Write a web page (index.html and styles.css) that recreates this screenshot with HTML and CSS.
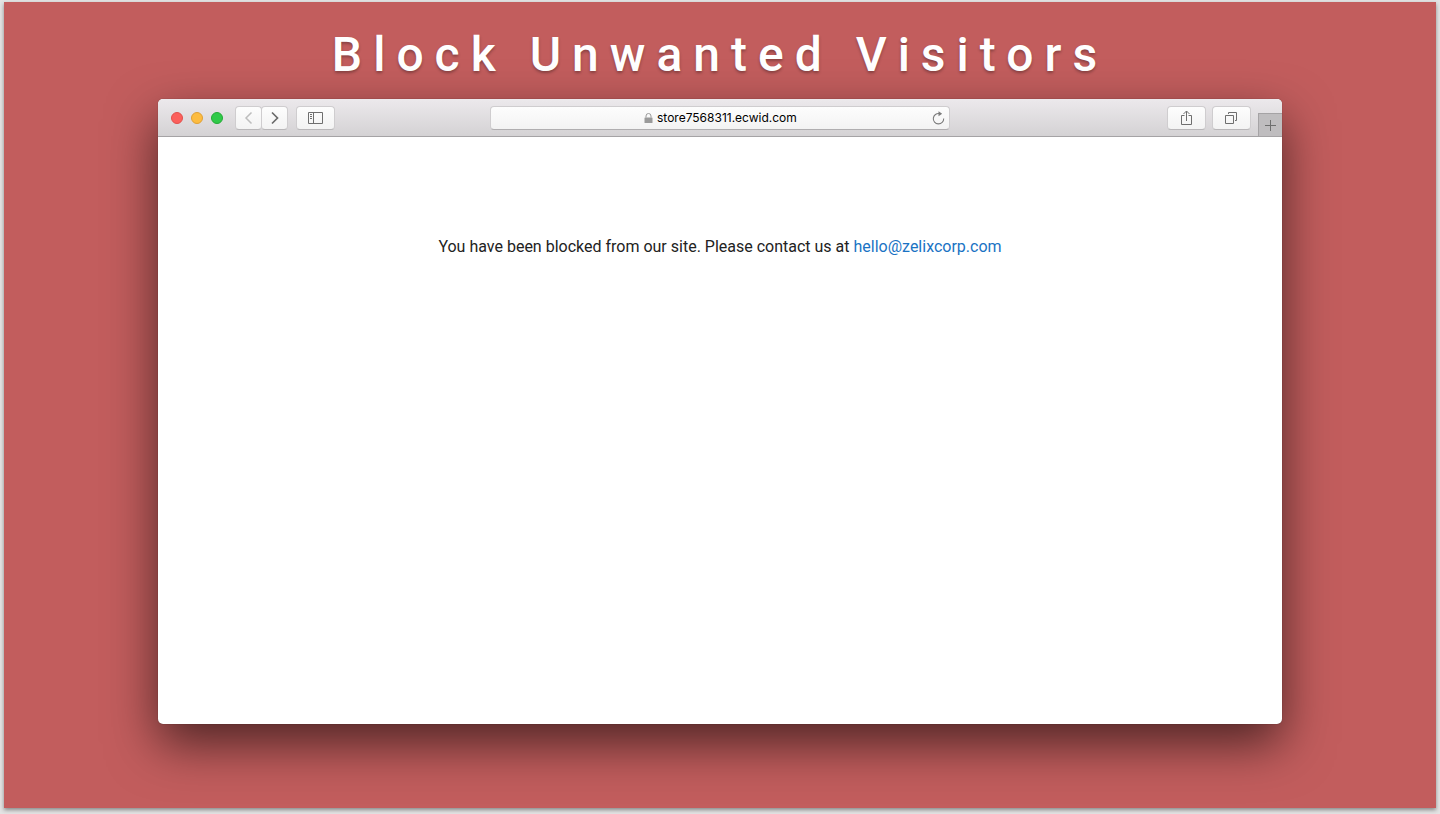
FILE: index.html
```html
<!DOCTYPE html>
<html lang="en">
<head>
    <meta charset="UTF-8">
    <meta name="viewport" content="width=device-width, initial-scale=1.0">
    <title>Block Unwanted Visitors</title>
    <link rel="stylesheet" href="styles.css">
</head>
<body>
    <div class="slide">
        <h1 class="title">Block Unwanted Visitors</h1>
        <div class="browser">
            <div class="toolbar">
                <div class="tools">
                    <div class="lights">
                        <button class="light red" aria-label="Close"></button>
                        <button class="light yellow" aria-label="Minimize"></button>
                        <button class="light green" aria-label="Zoom"></button>
                    </div>
                    <div class="nav">
                        <button class="tool back" aria-label="Back">
                            <svg width="10" height="14" viewBox="0 0 10 14" fill="none" stroke="#bdbdbd" stroke-width="1.5"><path d="M7.5 1.5 2 7l5.5 5.5"/></svg>
                        </button>
                        <button class="tool forward" aria-label="Forward">
                            <svg width="10" height="14" viewBox="0 0 10 14" fill="none" stroke="#6a6a6a" stroke-width="1.7"><path d="M2 1.5 7.5 7 2 12.5"/></svg>
                        </button>
                    </div>
                    <button class="tool" aria-label="Show sidebar">
                        <svg width="15" height="12" viewBox="0 0 15 12" fill="none" stroke="#6e6e6e"><path d="M.5.5h14v11H.5zM5.5.5v11M2 2.5h2M2 4.5h2M2 6.5h2"/></svg>
                    </button>
                </div>
                <div class="address">
                    <div class="site">
                        <svg width="9" height="10" viewBox="0 0 9 10"><path d="M2 4.5V3a2.5 2.5 0 0 1 5 0v1.5" fill="none" stroke="#9a9a9a"/><rect x="0.5" y="4.5" width="8" height="5.5" rx="0.5" fill="#9a9a9a"/></svg>
                        <input class="url" type="text" aria-label="Address" value="store7568311.ecwid.com">
                    </div>
                    <button class="reload" aria-label="Reload">
                        <svg width="13" height="14" viewBox="0 0 13 14"><path d="M7.5 2.6A5.2 5.2 0 1 0 11.7 7.5" fill="none" stroke="#7c7c7c" stroke-width="1.1"/><path d="M6.5.2 10.2 2.8 6.5 5.2z" fill="#7c7c7c"/></svg>
                    </button>
                </div>
                <div class="tools right">
                    <button class="tool" aria-label="Share">
                        <svg width="13" height="16" viewBox="0 0 13 16" fill="none" stroke="#6e6e6e"><path d="M4.5 5.5h-3v9h10v-9h-3M6.5 11V1.2M3.5 4l3-3 3 3"/></svg>
                    </button>
                    <button class="tool" aria-label="Show all tabs">
                        <svg width="13" height="13" viewBox="0 0 13 13" fill="none" stroke="#6e6e6e"><path d="M.5 4.5h8v8h-8zM3.5 3V1.5h8v8H10"/></svg>
                    </button>
                    <button class="new-tab" aria-label="New tab">
                        <svg width="11" height="11" viewBox="0 0 11 11" stroke="#6e6e6e"><path d="M5.5 0v11M0 5.5h11"/></svg>
                    </button>
                </div>
            </div>
            <div class="page">
                <p class="message">You have been blocked from our site. Please contact us at <a href="mailto:hello@zelixcorp.com">hello@zelixcorp.com</a></p>
            </div>
        </div>
    </div>
</body>
</html>
```

FILE: styles.css
```css
* {
    box-sizing: border-box;
}
body {
    margin: 0;
    padding: 2px 4px 6px;
    min-height: 100vh;
    display: flex;
    background: #e3e3e3;
    font-family: Inter, "Liberation Sans", sans-serif;
}
.slide {
    flex: 1;
    display: flex;
    flex-direction: column;
    align-items: center;
    padding: 23px 20px 84px;
    background: #c25d5d;
    box-shadow: 0 2px 4px rgba(0, 0, 0, 0.4);
}
.title {
    margin: 0 0 14px;
    font-family: Roboto, sans-serif;
    font-size: 48px;
    font-weight: 500;
    line-height: 60px;
    letter-spacing: 11px;
    text-align: center;
    color: #fff;
    text-shadow: 0 2px 3px rgba(0, 0, 0, 0.3);
}
.browser {
    flex: 1;
    width: 100%;
    max-width: 1124px;
    display: flex;
    flex-direction: column;
    border-radius: 5px;
    background: #fff;
    box-shadow: 0 0 1px rgba(0, 0, 0, 0.5), 0 20px 50px rgba(0, 0, 0, 0.6);
}
.toolbar {
    display: grid;
    grid-template-columns: 1fr 41% 1fr;
    align-items: center;
    height: 38px;
    border-bottom: 1px solid #a5a3a5;
    border-radius: 5px 5px 0 0;
    background: linear-gradient(#ece9ec, #d4d2d4);
    overflow: hidden;
}
button {
    padding: 0;
    border: none;
    background: none;
}
.tools {
    display: flex;
    align-items: center;
    padding-left: 13px;
}
.lights {
    display: flex;
    gap: 8px;
    margin-right: 12px;
}
.light {
    width: 12px;
    height: 12px;
    border-radius: 50%;
}
.red {
    background: #fc605c;
    border: 1px solid #e2504c;
}
.yellow {
    background: #fdbc40;
    border: 1px solid #e0a034;
}
.green {
    background: #30ca49;
    border: 1px solid #24aa36;
}
.nav {
    display: flex;
    margin-right: 8px;
}
.tool {
    display: flex;
    align-items: center;
    justify-content: center;
    width: 39px;
    height: 24px;
    border: 1px solid #cfcdcf;
    border-bottom-color: #b9b7b9;
    border-radius: 4px;
    background: linear-gradient(#fdfdfd, #f3f3f3);
}
.nav .tool {
    width: 27px;
}
.forward {
    margin-left: -1px;
}
.address {
    display: flex;
    align-items: center;
    height: 24px;
    padding: 0 4px;
    border: 1px solid #cfcdcf;
    border-bottom-color: #b0aeb0;
    border-radius: 4px;
    background: linear-gradient(#fdfdfd, #f3f3f3);
}
.site {
    flex: 1;
    display: flex;
    align-items: center;
    justify-content: center;
    gap: 4px;
    padding-left: 18px;
}
.url {
    width: 144px;
    field-sizing: content;
    padding: 0;
    border: none;
    outline: none;
    background: none;
    font-family: inherit;
    font-size: 12px;
    color: #000;
}
.reload {
    display: flex;
}
.right {
    align-self: stretch;
    justify-content: flex-end;
    gap: 6px;
}
.new-tab {
    align-self: flex-end;
    display: flex;
    align-items: center;
    justify-content: center;
    width: 24px;
    height: 23px;
    margin-left: 1px;
    border: 1px solid #a5a3a5;
    border-width: 1px 0 0 1px;
    background: #bfbdbf;
}
.page {
    flex: 1;
    padding: 98px 20px;
}
.message {
    margin: 0;
    font-family: Roboto, "Liberation Sans", sans-serif;
    font-size: 16px;
    line-height: 24px;
    text-align: center;
    color: #222;
}
.message a {
    color: #1a73c4;
    text-decoration: none;
}
```
